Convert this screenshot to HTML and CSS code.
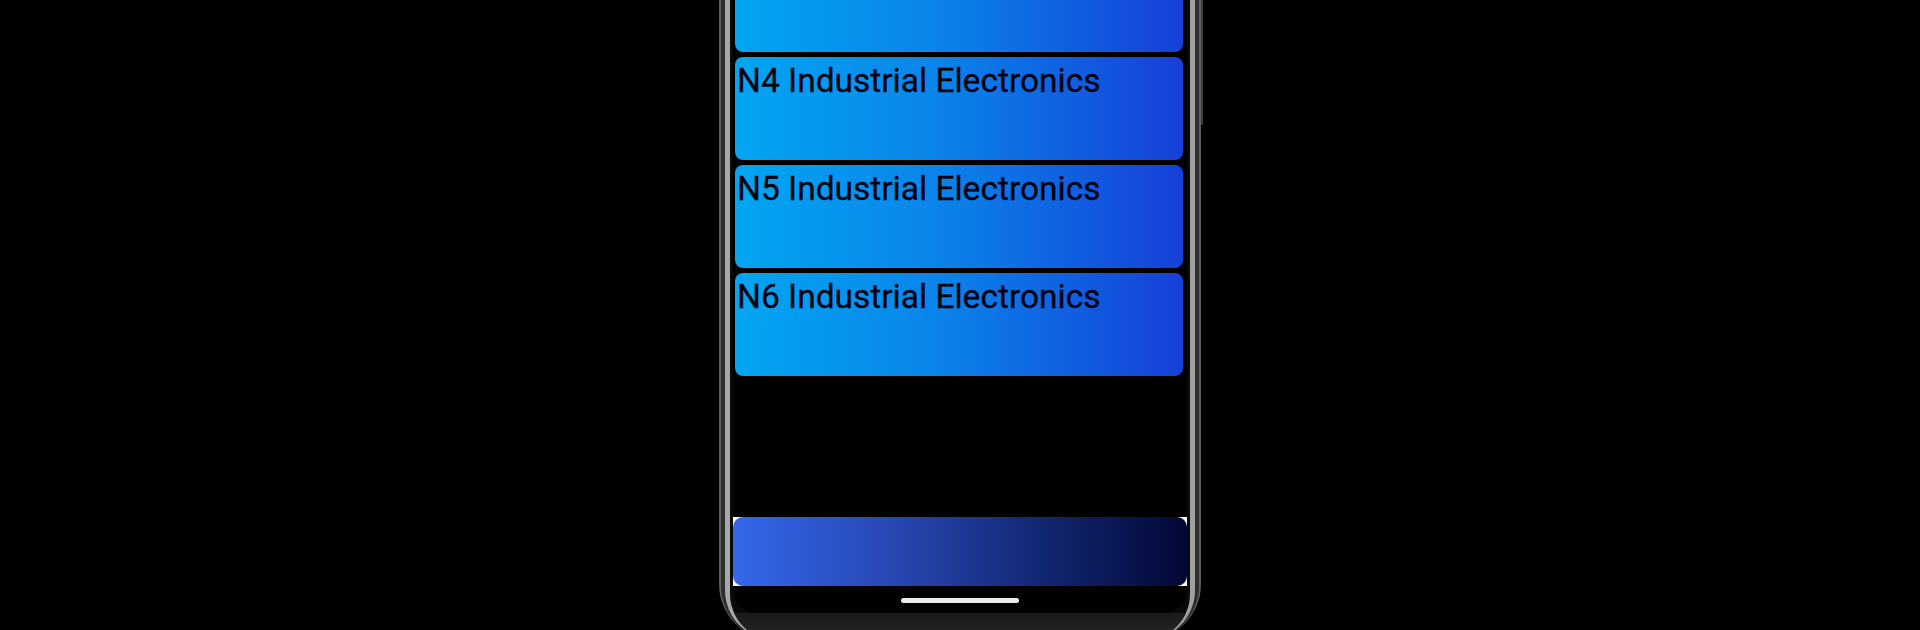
FILE: index.html
```html
<!DOCTYPE html>
<html>
<head>
<meta charset="utf-8">
<link rel="stylesheet" href="styles.css">
</head>
<body>
<div class="phone">
  <div class="side-button"></div>
  <div class="band b2">
    <div class="band b3">
      <div class="band b4">
        <div class="screen">
          <div class="content">
            <div class="list">
              <div class="card"></div>
              <div class="card"><span class="card-title">N4 Industrial Electronics</span></div>
              <div class="card"><span class="card-title">N5 Industrial Electronics</span></div>
              <div class="card"><span class="card-title">N6 Industrial Electronics</span></div>
            </div>
          </div>
          <div class="adbar"><div class="adbar-inner"></div></div>
          <div class="navbar"><div class="home-indicator"></div></div>
        </div>
        <div class="chin"></div>
      </div>
    </div>
  </div>
</div>
</body>
</html>
```

FILE: styles.css
```css
html, body {
  margin: 0;
  padding: 0;
  background: #000;
  height: 630px;
  overflow: hidden;
}

.phone {
  position: relative;
  width: 482px;
  height: 640px;
  margin: 0 auto;
  background: #5e5e5e;
  padding: 0 2px;
  box-sizing: border-box;
  border-radius: 0 0 56px 56px;
  display: flex;
}

.side-button {
  position: absolute;
  right: -2px;
  top: 0;
  width: 2px;
  height: 125px;
  background: #3c3c3c;
}

.band {
  flex: 1;
  display: flex;
  flex-direction: column;
  border-radius: 0 0 54px 54px;
}

.b2 {
  background: #2e2e2e;
  padding: 0 4px;
}

.b3 {
  background: linear-gradient(90deg, #a8a8a8, #8a8a8a 50%, #a0a0a0);
  padding: 0 5px;
  border-radius: 0 0 50px 50px;
}

.b4 {
  background: #0a0a0a;
  padding: 0 3px;
  border-radius: 0 0 46px 46px;
  overflow: hidden;
}

.screen {
  height: 613px;
  background: #000;
  display: flex;
  flex-direction: column;
  border-radius: 0 0 22px 22px;
  overflow: hidden;
}

.chin {
  flex: 1;
  background: linear-gradient(180deg, #1a1a1a, #262626);
}

.content {
  height: 517px;
  overflow: hidden;
}

.list {
  display: flex;
  flex-direction: column;
  gap: 5px;
  padding: 0 4px 0 2px;
  margin-top: -51px;
}

.card {
  height: 103px;
  box-sizing: border-box;
  border-radius: 8px;
  background: linear-gradient(90deg, #03a6f2 0%, #0a84ea 45%, #1640d8 100%);
  padding: 3px 0 0 2px;
}

.card-title {
  font-family: Roboto, "Liberation Sans", sans-serif;
  font-size: 33.5px;
  color: #01030f;
  line-height: 41px;
  -webkit-text-stroke: 0.3px #01030f;
}

.adbar {
  height: 69px;
  background: #fff;
  display: flex;
}

.adbar-inner {
  flex: 1;
  border-radius: 10px;
  background: linear-gradient(90deg, #3468ea 0%, #2848b4 35%, #142a78 65%, #020835 100%);
}

.navbar {
  height: 27px;
  display: flex;
  justify-content: center;
  padding-top: 12px;
  box-sizing: border-box;
}

.home-indicator {
  width: 118px;
  height: 5px;
  border-radius: 3px;
  background: #ececec;
}
```
